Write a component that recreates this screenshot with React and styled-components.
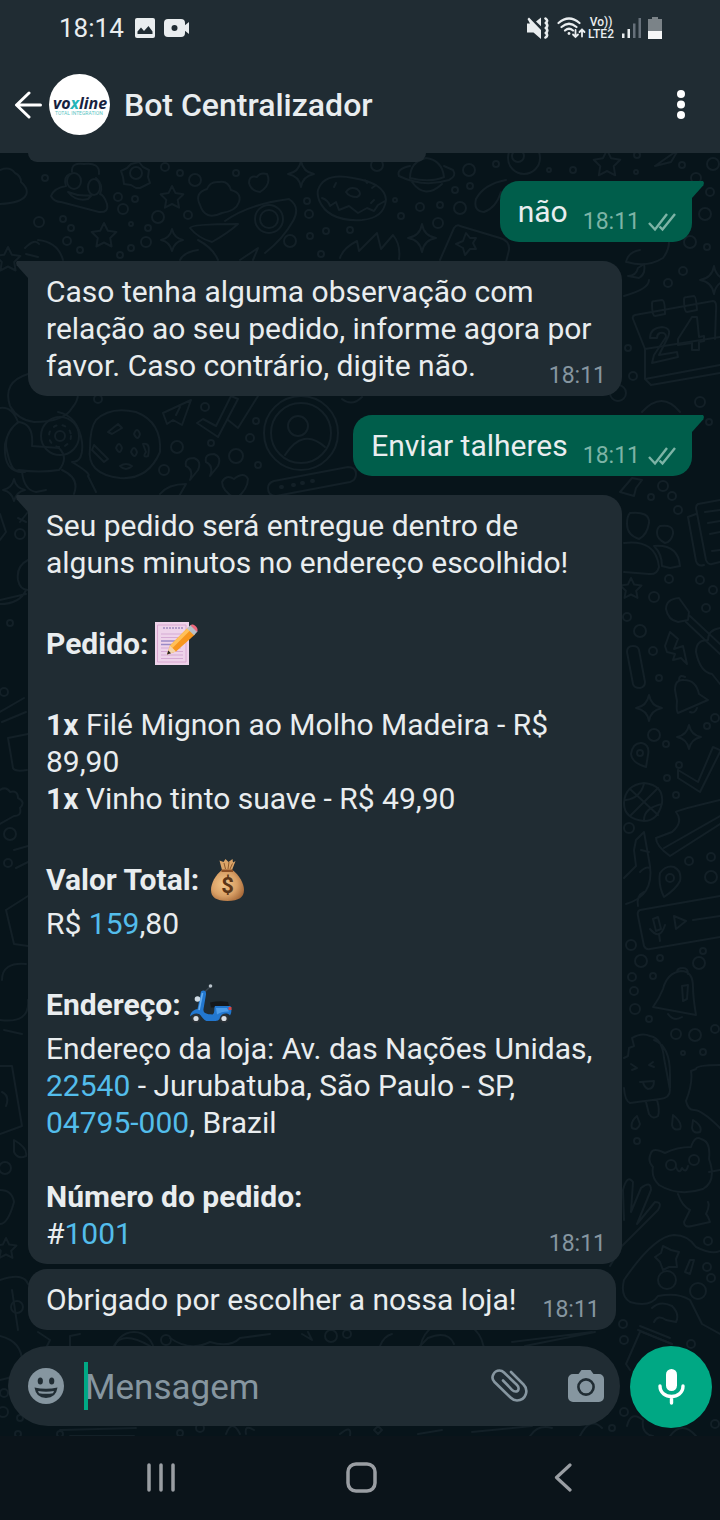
import React from "react";
import styled, { createGlobalStyle, css } from "styled-components";

const color = {
  bar: "#202c33",
  incoming: "#202c33",
  outgoing: "#005e4b",
  chat: "#07141a",
  doodle: "#132027",
  nav: "#0b141a",
  text: "#e9edef",
  muted: "#8696a0",
  sent: "#7db4a6",
  link: "#53bdeb",
  accent: "#00a884",
};

const GlobalStyle = createGlobalStyle`
  *, *::before, *::after { box-sizing: border-box; }
  body {
    margin: 0;
    background: ${color.nav};
    color: ${color.text};
    font-family: Roboto, "Liberation Sans", sans-serif;
  }
  svg { display: block; flex: none; }
`;

const Screen = styled.div`
  display: flex;
  flex-direction: column;
  min-height: 100vh;
`;

const IconButton = styled.button`
  display: flex;
  align-items: center;
  justify-content: center;
  padding: 0;
  border: 0;
  background: none;
  color: inherit;
  cursor: pointer;
`;

/* ---------- top bars ---------- */

const TopBars = styled.header`
  position: relative;
  background: ${color.bar};
`;

const StatusBar = styled.div`
  display: flex;
  align-items: center;
  justify-content: space-between;
  height: 56px;
  padding: 0 58px 0 59px;
`;

const StatusGroup = styled.div`
  display: flex;
  align-items: center;
  gap: ${(p) => p.$gap}px;
`;

const Clock = styled.time`
  margin-right: 2px;
  font-size: 26px;
  line-height: 32px;
`;

const Carrier = styled.div`
  display: flex;
  flex-direction: column;
  align-items: center;
  width: 28px;
  font-size: 12px;
  font-weight: 500;
  line-height: 12px;
`;

const ChatHeader = styled.div`
  display: flex;
  align-items: center;
  height: 97px;
  padding: 0 20px 0 14px;
`;

const BackButton = styled(IconButton)`
  width: 35px;
  height: 60px;
  justify-content: flex-start;
`;

const Avatar = styled.div`
  width: 61px;
  height: 61px;
  margin-right: 14px;
`;

const Title = styled.h1`
  flex: 1;
  margin: 0;
  font-size: 32px;
  font-weight: 500;
  line-height: 40px;
`;

const MenuButton = styled(IconButton)`
  width: 38px;
  height: 60px;
`;

/* ---------- conversation ---------- */

const Chat = styled.main`
  position: relative;
  display: flex;
  flex: 1;
  flex-direction: column;
  overflow: hidden;
  background: ${color.chat};
`;

const WallpaperSvg = styled.svg`
  position: absolute;
  inset: 0;
  width: 100%;
  height: 100%;
`;

const Messages = styled.div`
  position: relative;
  display: flex;
  flex: 1;
  flex-direction: column;
  align-items: flex-start;
  gap: 19px;
  padding: 0 28px;
`;

const ScrolledBubble = styled.div`
  width: 60%;
  height: 9px;
  border-radius: 0 0 18px 18px;
  background: ${color.incoming};
`;

const tail = css`
  &::before {
    content: "";
    position: absolute;
    top: 0;
    ${(p) => (p.$mine ? "left: 100%;" : "right: 100%;")}
    width: 12px;
    height: 17px;
    background: inherit;
    clip-path: ${(p) =>
      p.$mine
        ? "polygon(0 0, 92% 0, 100% 10%, 95% 25%, 0 100%)"
        : "polygon(100% 0, 8% 0, 0 10%, 5% 25%, 100% 100%)"};
  }
`;

const Bubble = styled.article`
  position: relative;
  display: flow-root;
  align-self: ${(p) => (p.$mine ? "flex-end" : "flex-start")};
  max-width: calc(100% - 70px);
  padding: 12px 16px 12px 18px;
  border-radius: 19px;
  background: ${(p) => (p.$mine ? color.outgoing : color.incoming)};
  font-size: 30px;
  line-height: 37px;
  ${(p) => p.$tail && (p.$mine ? "border-top-right-radius: 0;" : "border-top-left-radius: 0;")}
  ${(p) => p.$tail && tail}
`;

const MessageGroup = styled.div`
  display: flex;
  flex-direction: column;
  align-items: flex-start;
  gap: 5px;
  width: 100%;
`;

const Line = styled.p`
  margin: 0 0 ${(p) => (p.$gapAfter ? 37 : 0)}px;
`;

const EmojiLine = styled.p`
  display: flex;
  align-items: center;
  gap: ${(p) => p.$gap || 9}px;
  height: 51px;
  margin: 0;
  font-weight: 700;
`;

const Link = styled.a`
  color: ${color.link};
  text-decoration: none;
`;

const Stamp = styled.span`
  float: right;
  display: flex;
  align-items: center;
  gap: 8px;
  margin: 15px 0 -6px ${(p) => (p.$mine ? 15 : 26)}px;
  color: ${(p) => (p.$mine ? color.sent : color.muted)};
  font-size: 23px;
  line-height: 28px;
`;

/* ---------- composer ---------- */

const Composer = styled.form`
  position: relative;
  display: flex;
  align-items: flex-start;
  gap: 10px;
  padding: 16px 8px 8px;
`;

const InputBar = styled.div`
  display: flex;
  flex: 1;
  align-items: center;
  min-width: 0;
  height: 80px;
  padding: 0 16px 0 20px;
  border-radius: 40px;
  background: ${color.bar};
  color: ${color.muted};
`;

const Caret = styled.span`
  flex: none;
  width: 4px;
  height: 48px;
  margin-left: 20px;
  background: ${color.accent};
`;

const Field = styled.input`
  flex: 1;
  width: 0;
  min-width: 0;
  height: 60px;
  margin-left: -3px;
  padding: 2px 0 0;
  border: 0;
  outline: 0;
  background: none;
  color: ${color.text};
  font-family: inherit;
  font-size: 35px;
  &::placeholder { color: ${color.muted}; opacity: 1; }
`;

const BarButtons = styled.div`
  display: flex;
  align-items: center;
  gap: 40px;
`;

const MicButton = styled(IconButton)`
  flex: none;
  width: 82px;
  height: 82px;
  border-radius: 50%;
  background: ${color.accent};
`;

/* ---------- system navigation ---------- */

const NavBar = styled.nav`
  display: flex;
  height: 84px;
  padding: 0 56px 2px 60px;
  background: ${color.nav};
`;

const NavButton = styled(IconButton)`
  flex: 1;
  color: #9a9ea3;
`;

/* ---------- icons ---------- */

const ImageIcon = () => (
  <svg width="20" height="20" viewBox="0 0 20 20">
    <rect width="20" height="20" rx="2" fill={color.text} />
    <path d="M2.500 16v-2.500L6 9.500l3 3.500 4.500-5 4 5.500V16z" fill={color.bar} />
  </svg>
);

const RecordIcon = () => (
  <svg width="25" height="18" viewBox="0 0 25 18">
    <rect width="21" height="18" rx="4" fill={color.text} />
    <path d="M20 7l5-4v12l-5-4z" fill={color.text} />
    <circle cx="10.500" cy="9" r="3" fill={color.bar} />
  </svg>
);

const MuteIcon = () => (
  <svg width="23" height="22" viewBox="0 0 23 22">
    <path d="M0 6.500h3L0.500 2 2 .5 14 13v9L6.500 15.500H0z M9 4.500 14 .5v8.800z" fill={color.text} />
    <path d="M18.500 1.500q3 2 .5 4.500 2.500 2.500 0 5 2.500 2.500 0 5 2.500 2.500-.5 4.500" fill="none" stroke={color.text} strokeWidth="2.600" strokeLinecap="round" />
  </svg>
);

const WifiIcon = () => (
  <svg width="29" height="22" viewBox="0 0 29 22" fill="none" stroke={color.text} strokeWidth="2.200" strokeLinecap="round">
    <path d="M1.500 6Q12 -3 22.500 6M4.500 10Q12 3.500 19.500 10M8 13.500Q12 10 16 13.500" />
    <circle cx="12" cy="16.500" r="1.400" fill={color.text} stroke="none" />
    <path d="M18.500 13v7m-2.500-2.500 2.500 2.500 2.500-2.500M25 19.500v-7m-2.500 2.500 2.500-2.500 2.500 2.500" strokeWidth="1.800" />
  </svg>
);

const SignalIcon = () => (
  <svg width="19" height="20" viewBox="0 0 19 20">
    <path d="M0 15.500h2.500V20H0zM5.500 11H8v9H5.500z" fill={color.text} />
    <path d="M11 5.500h2.500V20H11zM16.500 0H19v20h-2.500z" fill="#66707a" />
  </svg>
);

const BatteryIcon = () => (
  <svg width="14" height="22" viewBox="0 0 14 22">
    <path d="M4 0h6v2h4v12H0V2h4z" fill="#7b8388" />
    <path d="M0 14h14v8H0z" fill="#f5f6f7" />
  </svg>
);

const BackIcon = () => (
  <svg width="28" height="28" viewBox="0 0 28 28" fill="none" stroke="#fff" strokeWidth="3" strokeLinejoin="round" strokeLinecap="round">
    <path d="M15 2 2.500 14 15 26M3.500 14H26.500" />
  </svg>
);

const DotsIcon = () => (
  <svg width="8" height="29" viewBox="0 0 8 29" fill="#fff">
    <circle cx="4" cy="4" r="4" />
    <circle cx="4" cy="14.500" r="4" />
    <circle cx="4" cy="25" r="4" />
  </svg>
);

const Logo = () => (
  <svg width="61" height="61" viewBox="0 0 61 61" role="img" aria-label="voxline">
    <circle cx="30.500" cy="30.500" r="30.500" fill="#fff" />
    <g fontFamily="'Open Sans', sans-serif" fontSize="16" fontWeight="700" fontStyle="italic" fill="#17223f">
      <text x="4" y="35">vo<tspan fill="#25b5b8">x</tspan>line</text>
    </g>
    <text x="6" y="41" fontFamily="Roboto, sans-serif" fontSize="5" fill="#5cc5c4">TOTAL INTEGRATION</text>
  </svg>
);

const CheckIcon = () => (
  <svg width="28" height="20" viewBox="0 0 28 20" fill="none" stroke={color.sent} strokeWidth="2.400">
    <path d="M1 11l6 6.500L19 2M11.500 14.500l3 3L27 2" />
  </svg>
);

const SmileIcon = () => (
  <svg width="36" height="36" viewBox="0 0 36 36">
    <circle cx="18" cy="18" r="18" fill={color.muted} />
    <ellipse cx="12.300" cy="13" rx="2.600" ry="3.500" fill={color.bar} />
    <ellipse cx="23.700" cy="13" rx="2.600" ry="3.500" fill={color.bar} />
    <path d="M6.500 19.500q11.500 2.500 23 0Q28 30 18 30T6.500 19.500z" fill={color.bar} />
    <path d="M10 23q8 1.600 16 0l-1 2.200q-7 1.300-14 0z" fill={color.muted} />
  </svg>
);

const ClipIcon = () => (
  <svg width="37" height="34" viewBox="0 0 37 34" fill="none" stroke={color.muted} strokeWidth="2.600" strokeLinecap="round">
    <path d="M20 3 32.500 15.500C38 21 35 31.500 26 31.500c-3 0-5-1.500-6.500-3L3.500 13C-1 8.500 3 1.500 8.500 1.500c2 0 3.500 1 4.500 2L26 16c2.500 2.500 2 6.500-1.500 6.500-1.500 0-2.500-.7-3.500-1.700L12 11.500" />
  </svg>
);

const CameraIcon = () => (
  <svg width="36" height="34" viewBox="0 0 36 34">
    <path d="M10.500 5 13.500 1h9l3 4H31a5 5 0 0 1 5 5v18a5 5 0 0 1-5 5H5a5 5 0 0 1-5-5V10a5 5 0 0 1 5-5z" fill={color.muted} />
    <circle cx="18" cy="18" r="7.600" fill={color.muted} stroke={color.bar} strokeWidth="2.600" />
  </svg>
);

const MicIcon = () => (
  <svg width="27" height="36" viewBox="0 0 27 36">
    <rect x="8" y="0" width="11" height="22" rx="5.500" fill="#fff" />
    <path d="M2 17c0 14 23 14 23 0M13.500 27.500V34" fill="none" stroke="#fff" strokeWidth="3.400" strokeLinecap="round" />
  </svg>
);

const RecentsIcon = () => (
  <svg width="28" height="29" viewBox="0 0 28 29" stroke="currentColor" strokeWidth="3.500" strokeLinecap="round">
    <path d="M2 2v25M14 2v25M26 2v25" />
  </svg>
);

const HomeIcon = () => (
  <svg width="31" height="31" viewBox="0 0 31 31" fill="none" stroke="currentColor" strokeWidth="3.500">
    <rect x="2" y="2" width="27" height="27" rx="8" />
  </svg>
);

const NavBackIcon = () => (
  <svg width="18" height="29" viewBox="0 0 18 29" fill="none" stroke="currentColor" strokeWidth="3.200" strokeLinecap="round" strokeLinejoin="round">
    <path d="M16 2 2.500 14.500 16 27" />
  </svg>
);

const MemoEmoji = () => (
  <svg width="43" height="43" viewBox="0 0 43 43" role="img" aria-label="Memorando">
    <path d="M0 0h34v43H0z" fill="#eed3ea" />
    <path d="M2.500 3h28.500v37H2.500z" fill="none" stroke="#dba8d2" strokeWidth="1" />
    <path d="M8 6h20" stroke="#a08bc0" strokeWidth="1.600" strokeDasharray="2 1" />
    <path d="M6 12h22M6 15.500h20M6 26h20M6 29.500h22M6 33h22M6 36.500h22" stroke="#d5aad4" />
    <path d="M6 19h15M6 22.500h12" stroke="#9a8ac6" strokeWidth="1.300" />
    <path d="M12 32.500 15 23.500 33 5.500l7 7L21 29.500z" fill="#f7961e" />
    <path d="M15 23.500 33 5.500l2.500 2.500L17.500 26z" fill="#ffc05a" />
    <path d="M12 32.500 15 23.500l6 6z" fill="#f4d5ab" />
    <path d="M12 32.500l1.300-4 2.700 2.700z" fill="#2c2623" />
    <path d="M32 6.500 35.500 3l7 6.500-3.500 3.800z" fill="#b9c0c8" />
    <path d="M35.500 3.200C38 .8 44.500 6 42 10z" fill="#ef6a7e" />
  </svg>
);

const MoneyEmoji = () => (
  <svg width="33" height="43" viewBox="0 0 33 43" role="img" aria-label="Saco de dinheiro">
    <defs>
      <radialGradient id="bag" cx=".4" cy=".45" r=".65">
        <stop offset="0" stopColor="#f2c689" />
        <stop offset=".6" stopColor="#d9a066" />
        <stop offset="1" stopColor="#a76a3a" />
      </radialGradient>
    </defs>
    <path d="M11 12 8.500 2.500 12.500 4 14.500 1l3 3 4-3 .5 3.500L24.500 3 21 12z" fill="#dba468" />
    <path d="M13 5l1.500 6M18 4l-1 7M21.500 5.500 19 11" stroke="#8d5a2c" strokeWidth="1" />
    <path d="M11 12h10.500C28 17 33 25 33 32c0 7-5 11-16.500 11S0 39 0 32c0-7 4.500-15 11-20z" fill="url(#bag)" />
    <path d="M10.500 11.500h11.500v2.500H10.500z" fill="#8a4f25" />
    <text x="16.500" y="35" textAnchor="middle" fontFamily="Roboto, sans-serif" fontSize="22" fontWeight="700" fill="#5b3517">$</text>
  </svg>
);

const ScooterEmoji = () => (
  <svg width="42" height="43" viewBox="0 0 42 43" role="img" aria-label="Lambreta">
    <path d="M14.500 9 20 4" stroke="#3a4650" strokeWidth="1.500" />
    <circle cx="20.500" cy="3" r="1.800" fill="#b9c3cb" />
    <path d="M20 19.500q10-2 18-.5l1.500 5.500H21z" fill="#15181b" />
    <circle cx="6" cy="35.500" r="4.500" fill="#2d3338" />
    <circle cx="6" cy="35.500" r="2.600" fill="#d9dee2" />
    <circle cx="34" cy="35.500" r="4.500" fill="#2d3338" />
    <circle cx="34" cy="35.500" r="2.600" fill="#d9dee2" />
    <path d="M11 8.500c3-2 5.500-.5 5 3L13.500 26c-.5 4 2.500 5.500 9 5.500 3-2 1-6 2.500-8.500h15.500c1.500 4 1 7-.5 9.500-3-3.500-9.500-2-10.500 3.500q-1 2-4 2h-8C13.500 38 12 33 9 31 5.500 29.500 2 31.500 0 33.500c.5-4.500 4-7 7.500-7.500z" fill="#2277cf" />
    <path d="M12.500 10 9 27" stroke="#66aef0" strokeWidth="1.600" />
    <path d="M26 25h11l2 3.500q-7-.5-12 3z" fill="#4b9be8" />
    <circle cx="7.500" cy="16" r="2.800" fill="#cfdbe4" />
    <path d="M38.500 24h3v3h-3z" fill="#d54848" />
  </svg>
);

/* ---------- wallpaper ---------- */

const bubbles = [
  [45, 178, 3], [39, 222, 5], [63, 219, 3], [71, 228, 3], [67, 241, 4], [80, 250, 3], [118, 197, 4], [123, 209, 5],
  [135, 199, 3], [158, 217, 6], [148, 228, 3], [146, 242, 5], [131, 224, 2], [131, 248, 3], [120, 255, 3], [165, 167, 4],
  [180, 173, 3], [195, 180, 6], [188, 215, 4], [236, 173, 3], [307, 201, 3], [309, 214, 4], [290, 241, 6], [310, 236, 3],
  [326, 231, 3], [350, 230, 3], [321, 254, 3], [395, 200, 2], [401, 216, 3], [420, 207, 4], [440, 205, 3], [460, 208, 6],
  [438, 223, 5], [469, 170, 6], [455, 190, 3], [470, 186, 3], [496, 164, 3], [377, 165, 6], [549, 170, 2], [573, 170, 3],
  [636, 172, 2], [637, 155, 3], [682, 165, 3], [713, 164, 6], [696, 178, 5], [710, 192, 4], [705, 214, 6], [690, 242, 6],
  [707, 247, 3], [683, 271, 4], [668, 283, 4], [628, 348, 3], [633, 376, 4], [700, 402, 5], [709, 422, 3], [98, 399, 4],
  [205, 407, 4], [177, 447, 6], [211, 443, 3], [164, 470, 5], [236, 456, 7], [250, 438, 4], [256, 421, 3], [258, 465, 3],
  [663, 486, 5], [651, 497, 3], [672, 496, 4], [678, 510, 4], [669, 579, 4], [700, 580, 4], [713, 590, 4], [654, 597, 5],
  [706, 608, 4], [640, 631, 6], [653, 651, 4], [659, 678, 3], [654, 735, 6], [666, 744, 3], [707, 726, 3], [715, 718, 4],
  [679, 765, 3], [667, 778, 3], [676, 795, 3], [629, 828, 5], [627, 617, 4], [689, 861, 4], [711, 857, 4], [711, 877, 6],
  [631, 945, 5], [641, 961, 6], [660, 958, 3], [703, 951, 3], [699, 963, 6], [632, 977, 4], [653, 976, 3], [634, 991, 4],
  [635, 1009, 5], [649, 1019, 3], [676, 1034, 5], [695, 1035, 6], [715, 1029, 4], [683, 1053, 2], [703, 1052, 3],
  [637, 1141, 3], [708, 1241, 4], [707, 1267, 4], [711, 1278, 4], [667, 1280, 9], [698, 1291, 8], [623, 1324, 4],
  [20, 534, 5], [10, 623, 3], [4, 692, 4], [10, 834, 6], [8, 863, 4], [5, 1168, 6], [17, 1307, 6], [4, 1393, 4],
  [3, 1412, 5], [20, 1418, 3], [166, 1340, 5], [331, 1336, 6], [347, 1334, 4], [624, 1340, 4], [691, 1344, 4],
  [715, 1424, 4], [624, 1412, 4], [612, 1428, 3], [200, 1428, 4], [18, 1434, 3], [60, 1434, 3], [180, 1433, 3],
];

const sparkles = [[301, 174, 13], [172, 240, 11], [422, 238, 14], [714, 280, 14], [649, 708, 13], [689, 737, 12], [14, 490, 11], [378, 1430, 4]];
const stars = [[172, 198, 12], [104, 236, 13], [8, 260, 13], [607, 164, 14], [631, 589, 11], [6, 1249, 11]];

const sparklePath = (x, y, r) =>
  `M${x} ${y - r}Q${x + 2} ${y - 2} ${x + r} ${y}Q${x + 2} ${y + 2} ${x} ${y + r}Q${x - 2} ${y + 2} ${x - r} ${y}Q${x - 2} ${y - 2} ${x} ${y - r}z`;

const starPath = (x, y, r) =>
  "M" +
  Array.from({ length: 10 }, (_, i) => {
    const a = (Math.PI / 5) * i - Math.PI / 2;
    const d = i % 2 ? r / 2 : r;
    return `${(x + Math.cos(a) * d).toFixed(1)} ${(y + Math.sin(a) * d).toFixed(1)}`;
  }).join("L") +
  "z";

const doodles = [
  /* clouds */
  "M0 170q10-4 15 3 6 3 6 9 8 7 5 13-4 8-26 9",
  "M200 205q-6-12 7-16 3-8 12-7 9-2 12 8 11 3 8 12-3 9-17 11-17 8-22-8z",
  /* pile with a face */
  "M72 172q-1-10 12-8 16-2 15 10M70 174q-7 3-4 12-12 2-15 10 3 6 10 6l38 10q10 1 8-8-3-9-7-10 4-9-4-16M68 192q8 10 20 7l4-4q-12 2-24-3z",
  /* gear */
  "M131 164l8-2 4 5 6 3-1 7 2 6-6 3-4 2-4 0-5-3-7-1-1-7-2-6 6-3z",
  /* heart */
  "M249 183q0-8 8-6 3-5 10-3 5 10-7 18-9-1-11-9z",
  /* rocket */
  "M190 228q1-4 48-4-10 9-26 18-14-4-22-14zM225 221q24-17 64-22 12 8 4 22-10 18-28 32M240 260l18-12-5 12M198 240q15 8 20 20M180 260q4-8 18-10",
  /* donut */
  "M318 190q6-18 35-12 32 5 33 22-2 18-24 20-34 2-43-20-2-6-1-10zM322 198q6 2 8 8l6-4 3 8 10-4 9 7 9-5 7 3 4-6 7-4M346 192q4-6 11-3 6 5 0 8-8 0-11-5M336 183l-2 4M372 188l4-3M374 200l-3 3M365 180l2 3",
  /* planet */
  "M410 178q0-16 16-20 16 2 18 19-14 6-34 1zM410 166q-14 3-11 10 24 12 50 4 8-4 4-10l-9-4M412 182q13 18 30 2",
  /* feather, card */
  "M506 180q-22 4-30 19-3 12 8 13 12-4 17-20M440 260l14-32q3-4 6-2l40 12q10 3 9 12l-3 12M466 233l-3 8-7 3 7 4 2 7 5-6 6 0-3-6 3-5-6 0z",
  "M340 258q3-10 17-17l2 10 18-18 4 16 12-14q8 10 6 24M25 248q10-10 14-4M26 254l12 3M38 240q20 2 25 20",
  /* paper plane */
  "M655 166l20-14M655 166l16-4 6-10",
  /* calendar */
  "M633 319q-1-3 2-4l78-14q4 0 3 10l-1 28M633 319l12 30v30l6 6 69-12M645 349l75-12M645 379l75-14M652 303q0-2 3-2l7-1q3 0 3 14l-10 2q-3 0-3-13zM684 299q0-2 3-2l7-1q2 0 3 14l-10 2q-3 0-3-13z",
  "M650 338q0-10 12-11 10 1 6 10l-9 18 18-3 1 5-26 6 2-8 12-18q0-5-6-4-3 1-3 5zM692 350v-7l-14 2v-6l14-22 5 0 2 20 5-1v5l-5 1v8z",
  "M626 262q2-10 14-12M627 262q20 6 36-4 6-8 6-16M624 296q25-7 25-16M628 276q8 0 10-8l6-4q2 10-5 14zM642 412q20-22 38 0",
  /* astronaut and cookie */
  "M28 374q-26 8-18 32 8 14 24 16 30 0 38-14 6-7 6-14M0 408q12-2 18 14-10 8-13 22-2 30 20 28M32 446q2-22-13-24-13 8-13 24 5 28 13 24 20 3 40 0 10-12 0-22zM58 412q20 4 24 30 2 20-10 20 20 12 16 14l8 16M22 472q2 18 14 20l10-2M62 470q18 8 12 24",
  "M96 420q14-14 40-8 26 10 24 40-12 28-40 26-34-4-30-30 0-20 6-28zM108 432l10-8 4 4-10 6zM134 434q3-8 6 0-2 8-6 0zM116 448q3-8 6 0-2 8-6 0zM131 452q3-8 6 0-2 8-6 0zM94 445l14 14-4 3-12-12zM120 466q6-4 12 0-6 6-12 0zM143 444q8-2 5 12-6 2-2-4z",
  /* plane, ticks, quotes */
  "M163 413l28-13-9 25-9-5-6 4zM176 415l4-8M197 423l6-4 13 7 15-30 7 3-20 38zM228 420l10 8 20-32M186 466q-2-8 8-8 8 3 4 12l-8 10q4-10-4-14zM206 462q-2-8 8-8 8 3 4 12l-8 10q4-10-4-14zM222 482q4-8 12-3 10-8 14 0 0 10-12 20-14-8-14-17M160 494q8-10 26-10l-8 14",
  /* profile, password field */
  "M285 455q18-28 40-8M268 488q0-5 6-7l74-14q8 0 8 7 0 6-6 8l-74 14q-8 0-8-8M342 399q10 8 20-2",
  /* group */
  "M630 513q20-2 19 10-2 12-10 16-12-4-12-15 0-8 3-11zM624 543q32-4 35 24-2 8-10 7l-25-2M660 526q14-2 13 8-2 8-8 9-8-4-8-10 0-5 3-7zM654 546q24-2 26 20l-10 2-8-2q0-12-8-20",
  /* newspaper */
  "M720 500l-22 4q-2 1-2 4l10 52q2 5 6 4l8-2M696 514l-8 3 8 44q2 6 8 4M705 512l15-2M708 523l12-2M710 534l10-2M712 551l8-1M620 492l12-14 10 2-6 8-2 8z",
  /* guitar */
  "M666 609q0-10 13-11l10 14-1 8-10 2q-10-2-12-13zM690 616l30 28M686 622l34 32M720 628q-12 2-12 12-12 0-12 12 4 20 16 22l8 10",
  /* bolt, bell, bar */
  "M670 632l-5 14 2 6 8 2-2 6 8-2 6 6-4-18-9 3 4-10zM675 690q0-11 9-10 12 0 15 14l9 6-30 13q-2-2-1-12zM679 680q0-6 6-3M690 712q5 2 7-4M627 652q0-6 6-6 5 0 6 4l6 32q0 5-5 6-6 0-7-4z",
  /* pins, ball, tick, shoe */
  "M631 754q2-12 11-11 8 2 6 12l-2 12q-14-4-15-13zM678 770l20 12 15-35 7 3M678 770v8l22 14 20-40M644 783q20 2 18 20-4 18-18 18-20-2-20-18 1-18 20-20zM630 789l28 26M658 788l-28 28M626 800q14-2 18-16M644 820q0-12 18-16M676 812q2-2 44-12M676 812q8 10-4 20l-16 6q0 8 14 18l50-32M664 848l56-32M660 873q6-8 14-6 8 4 6 14-4 8-16 16-6-12-4-24z",
  "M644 832l-8 8-2 10 2 16-12 12M644 832l6 34q4 30-24 38M638 906q-2-10 6-14M640 872q6-6 10-4M641 850l8 2",
  /* voice note */
  "M720 896l-80 14q-3 1-2 6l6 30q2 4 6 3l70-12M653 919l5-2 3 12-5 2zM650 929q10 12 15-4M659 934l1 7M674 916l12 5-10 8zM693 920l27-4",
  /* bell */
  "M653 1007q6-8 10-18 4-16 18-18 12 0 12 16 0 10 3 28zM668 1014q6 8 14 3M682 986l6-1-1 14-4 2zM677 972q0-4 6-4 5 0 5 6",
  /* ice cream */
  "M632 1038q10-6 18-2 12 2 14 22l6 32q0 8-10 9l-30 4q-5-2-6-15M632 1038l2 8-5 2-1 8-4 2M654 1040q16 6 16 34l0 14M646 1102l3 12q4 6 9 2 2-6-1-16M631 1064l6 4-5 2M653 1062l-4 3 5 2M640 1082l14-1q0 8-6 8-4-2-5-7",
  /* drops */
  "M637 1116q-7 6-5 12 6 3 8-4zM673 1115q10 8 7 14-7 2-8-4zM693 1120q10 6 7 12-7 2-8-4zM720 1065q-24 0-24 4l-5 2q2 12-5 30 2 9 8 9 8 0 26 18",
  /* cat */
  "M651 1153q2-6 14 0 12-6 26-6 4-12 10-8 10 2 8 20 8 22-6 30-24 8-44-4-8-8-6-18-6-6-2-14zM676 1167q3 8 6 1 4 6 6-2M678 1194q4 12 12 16l-6 12q0 6 8 4l18-4q-2-6-4-8 4-8 2-12M709 1172l11-2",
  /* hand and controller */
  "M624 1220l-1-30q4-16 10-8l-2 30 10-24q10-8 10 2l-14 34 18-22q8 0 3 8l-36 36-12 20M624 1280q30-44 50-45 14 0 22 12 16 8 24 4M624 1280q-4 16 6 22 20 6 28-6 20-4 32 4l12 24 18 10M663 1246l8 4 8 2-3 7 1 8-8 0-6 3-3-8-5-5 6-4zM690 1260l4 0-4 14-5-2zM652 1308q8-8 20-2 8 8 4 16l-10-2q-8-6-12 2",
  "M640 1326l30 12M638 1330l34 14M0 600l26-6M0 604q20 0 26-14M28 560q-12 6-10 20 2 10 10 10M0 540l6-8-6-18M20 522l8-10M18 518l8 4M0 712l24-14M2 722l24-10M8 738l20-4M8 738l5 30q2 4 14 2M0 790q6-4 10 2 8-2 8 6 8 4 2 10 2 8-6 8l-14 8M14 850l14-4M16 868l12-6",
  "M6 910l22-14M6 910l8 34 14 2M2 980q0-18 24-16M0 1020q30 4 28-20M4 1030l18 4M0 1066l12 0 10 60-22 8M2 1092q8 4 4 14M14 1140q14 8 12 16-8 4-12-4zM0 1190q12 0 14 12-6 22-14 22M0 1280q24-8 28 4M12 1290l6 40",
  /* bottom edge */
  "M0 1336q24 6 22 30 -6 12-22 14M38 1332l12 8-4 8M70 1346v-10l10-2M114 1346q8-16 36 0M170 1338q20 14 40 4 20 6 30-4l30-4M302 1334l10 6-4-8M380 1346q4-10 12-12M420 1346l8-8q20-8 26 6M512 1342l80-10M525 1346l70-14M640 1332l-14 32 4 6M642 1332l30 12M60 1430l76-2M70 1436l64 0M226 1434q6-16 14 0M246 1434q-2-10 8-4M340 1434q12-10 10 2M418 1434l24-4M472 1432l60-6M530 1436q8-12 22-8M580 1436q10-20 22-8M627 1426q4-16 16-6-2 14 10 16M670 1436q12-16 26 0",
];

const Wallpaper = () => (
  <WallpaperSvg viewBox="0 153 720 1283" preserveAspectRatio="xMidYMin slice" aria-hidden="true" fill="none" stroke={color.doodle} strokeWidth="2" strokeLinecap="round" strokeLinejoin="round">
    {bubbles.map(([x, y, r]) => <circle key={`${x}-${y}`} cx={x} cy={y} r={r} />)}
    {sparkles.map(([x, y, r]) => <path key={`${x}-${y}`} d={sparklePath(x, y, r)} />)}
    {stars.map(([x, y, r]) => <path key={`${x}-${y}`} d={starPath(x, y, r)} />)}
    {doodles.map((d) => <path key={d} d={d} />)}
    <ellipse cx="74" cy="181" rx="7" ry="8" />
    <ellipse cx="94" cy="187" rx="6" ry="8" />
    <circle cx="136" cy="173" r="6" />
    <circle cx="269" cy="219" r="14" />
    <circle cx="269" cy="219" r="9" />
    <circle cx="524" cy="158" r="16" />
    <circle cx="518" cy="156" r="6" />
    <circle cx="60" cy="436" r="19" />
    <circle cx="60" cy="436" r="5" />
    <circle cx="60" cy="436" r="11" strokeDasharray="3 6" />
    <circle cx="301" cy="433" r="37" />
    <circle cx="301" cy="433" r="30" />
    <circle cx="298" cy="426" r="10" />
    <circle cx="640" cy="753" r="3" />
    <circle cx="670" cy="878" r="4" />
    <circle cx="671" cy="1165" r="5" />
    <circle cx="694" cy="1160" r="5" />
    <circle cx="618" cy="393" r="8" />
    <circle cx="134" cy="1352" r="20" />
    <circle cx="452" cy="1352" r="32" />
    <path d="M281 487h1m11-2h1m8-2h1m9-2h1" strokeWidth="4" />
  </WallpaperSvg>
);

/* ---------- page ---------- */

const Time = ({ mine }) => (
  <Stamp $mine={mine}>
    <time>18:11</time>
    {mine && <CheckIcon />}
  </Stamp>
);

export default function App() {
  return (
    <>
      <GlobalStyle />
      <Screen>
        <TopBars>
          <StatusBar>
            <StatusGroup $gap={9}>
              <Clock>18:14</Clock>
              <ImageIcon />
              <RecordIcon />
            </StatusGroup>
            <StatusGroup $gap={7}>
              <MuteIcon />
              <StatusGroup $gap={1}>
                <WifiIcon />
                <Carrier>
                  <span>Vo))</span>
                  <span>LTE2</span>
                </Carrier>
              </StatusGroup>
              <SignalIcon />
              <BatteryIcon />
            </StatusGroup>
          </StatusBar>
          <ChatHeader>
            <BackButton type="button" aria-label="Voltar"><BackIcon /></BackButton>
            <Avatar><Logo /></Avatar>
            <Title>Bot Centralizador</Title>
            <MenuButton type="button" aria-label="Mais opções"><DotsIcon /></MenuButton>
          </ChatHeader>
        </TopBars>

        <Chat>
          <Wallpaper />
          <Messages>
            <ScrolledBubble />
            <Bubble $mine $tail>não<Time mine /></Bubble>
            <Bubble $tail>
              Caso tenha alguma observação com relação ao seu pedido, informe agora por favor. Caso contrário, digite não.
              <Time />
            </Bubble>
            <Bubble $mine $tail>Enviar talheres<Time mine /></Bubble>
            <MessageGroup>
              <Bubble $tail>
                <Line $gapAfter>Seu pedido será entregue dentro de alguns minutos no endereço escolhido!</Line>
                <EmojiLine $gap={7}>Pedido: <MemoEmoji /></EmojiLine>
                <Line>&nbsp;</Line>
                <Line><b>1x</b> Filé Mignon ao Molho Madeira - R$ 89,90</Line>
                <Line $gapAfter><b>1x</b> Vinho tinto suave - R$ 49,90</Line>
                <EmojiLine $gap={12}>Valor Total: <MoneyEmoji /></EmojiLine>
                <Line $gapAfter>R$ <Link href="tel:159">159</Link>,80</Line>
                <EmojiLine>Endereço: <ScooterEmoji /></EmojiLine>
                <Line $gapAfter>
                  Endereço da loja: Av. das Nações Unidas, <Link href="tel:22540">22540</Link> - Jurubatuba, São Paulo - SP,{" "}
                  <Link href="tel:04795000">04795-000</Link>, Brazil
                </Line>
                <Line><b>Número do pedido:</b></Line>
                <Line>#<Link href="tel:1001">1001</Link><Time /></Line>
              </Bubble>
              <Bubble>Obrigado por escolher a nossa loja!<Time /></Bubble>
            </MessageGroup>
          </Messages>

          <Composer onSubmit={(e) => e.preventDefault()}>
            <InputBar>
              <IconButton type="button" aria-label="Emojis"><SmileIcon /></IconButton>
              <Caret />
              <Field type="text" placeholder="Mensagem" aria-label="Mensagem" />
              <BarButtons>
                <IconButton type="button" aria-label="Anexar"><ClipIcon /></IconButton>
                <IconButton type="button" aria-label="Câmera"><CameraIcon /></IconButton>
              </BarButtons>
            </InputBar>
            <MicButton type="button" aria-label="Gravar áudio"><MicIcon /></MicButton>
          </Composer>
        </Chat>

        <NavBar aria-label="Navegação do sistema">
          <NavButton type="button" aria-label="Recentes"><RecentsIcon /></NavButton>
          <NavButton type="button" aria-label="Início"><HomeIcon /></NavButton>
          <NavButton type="button" aria-label="Voltar ao anterior"><NavBackIcon /></NavButton>
        </NavBar>
      </Screen>
    </>
  );
}
